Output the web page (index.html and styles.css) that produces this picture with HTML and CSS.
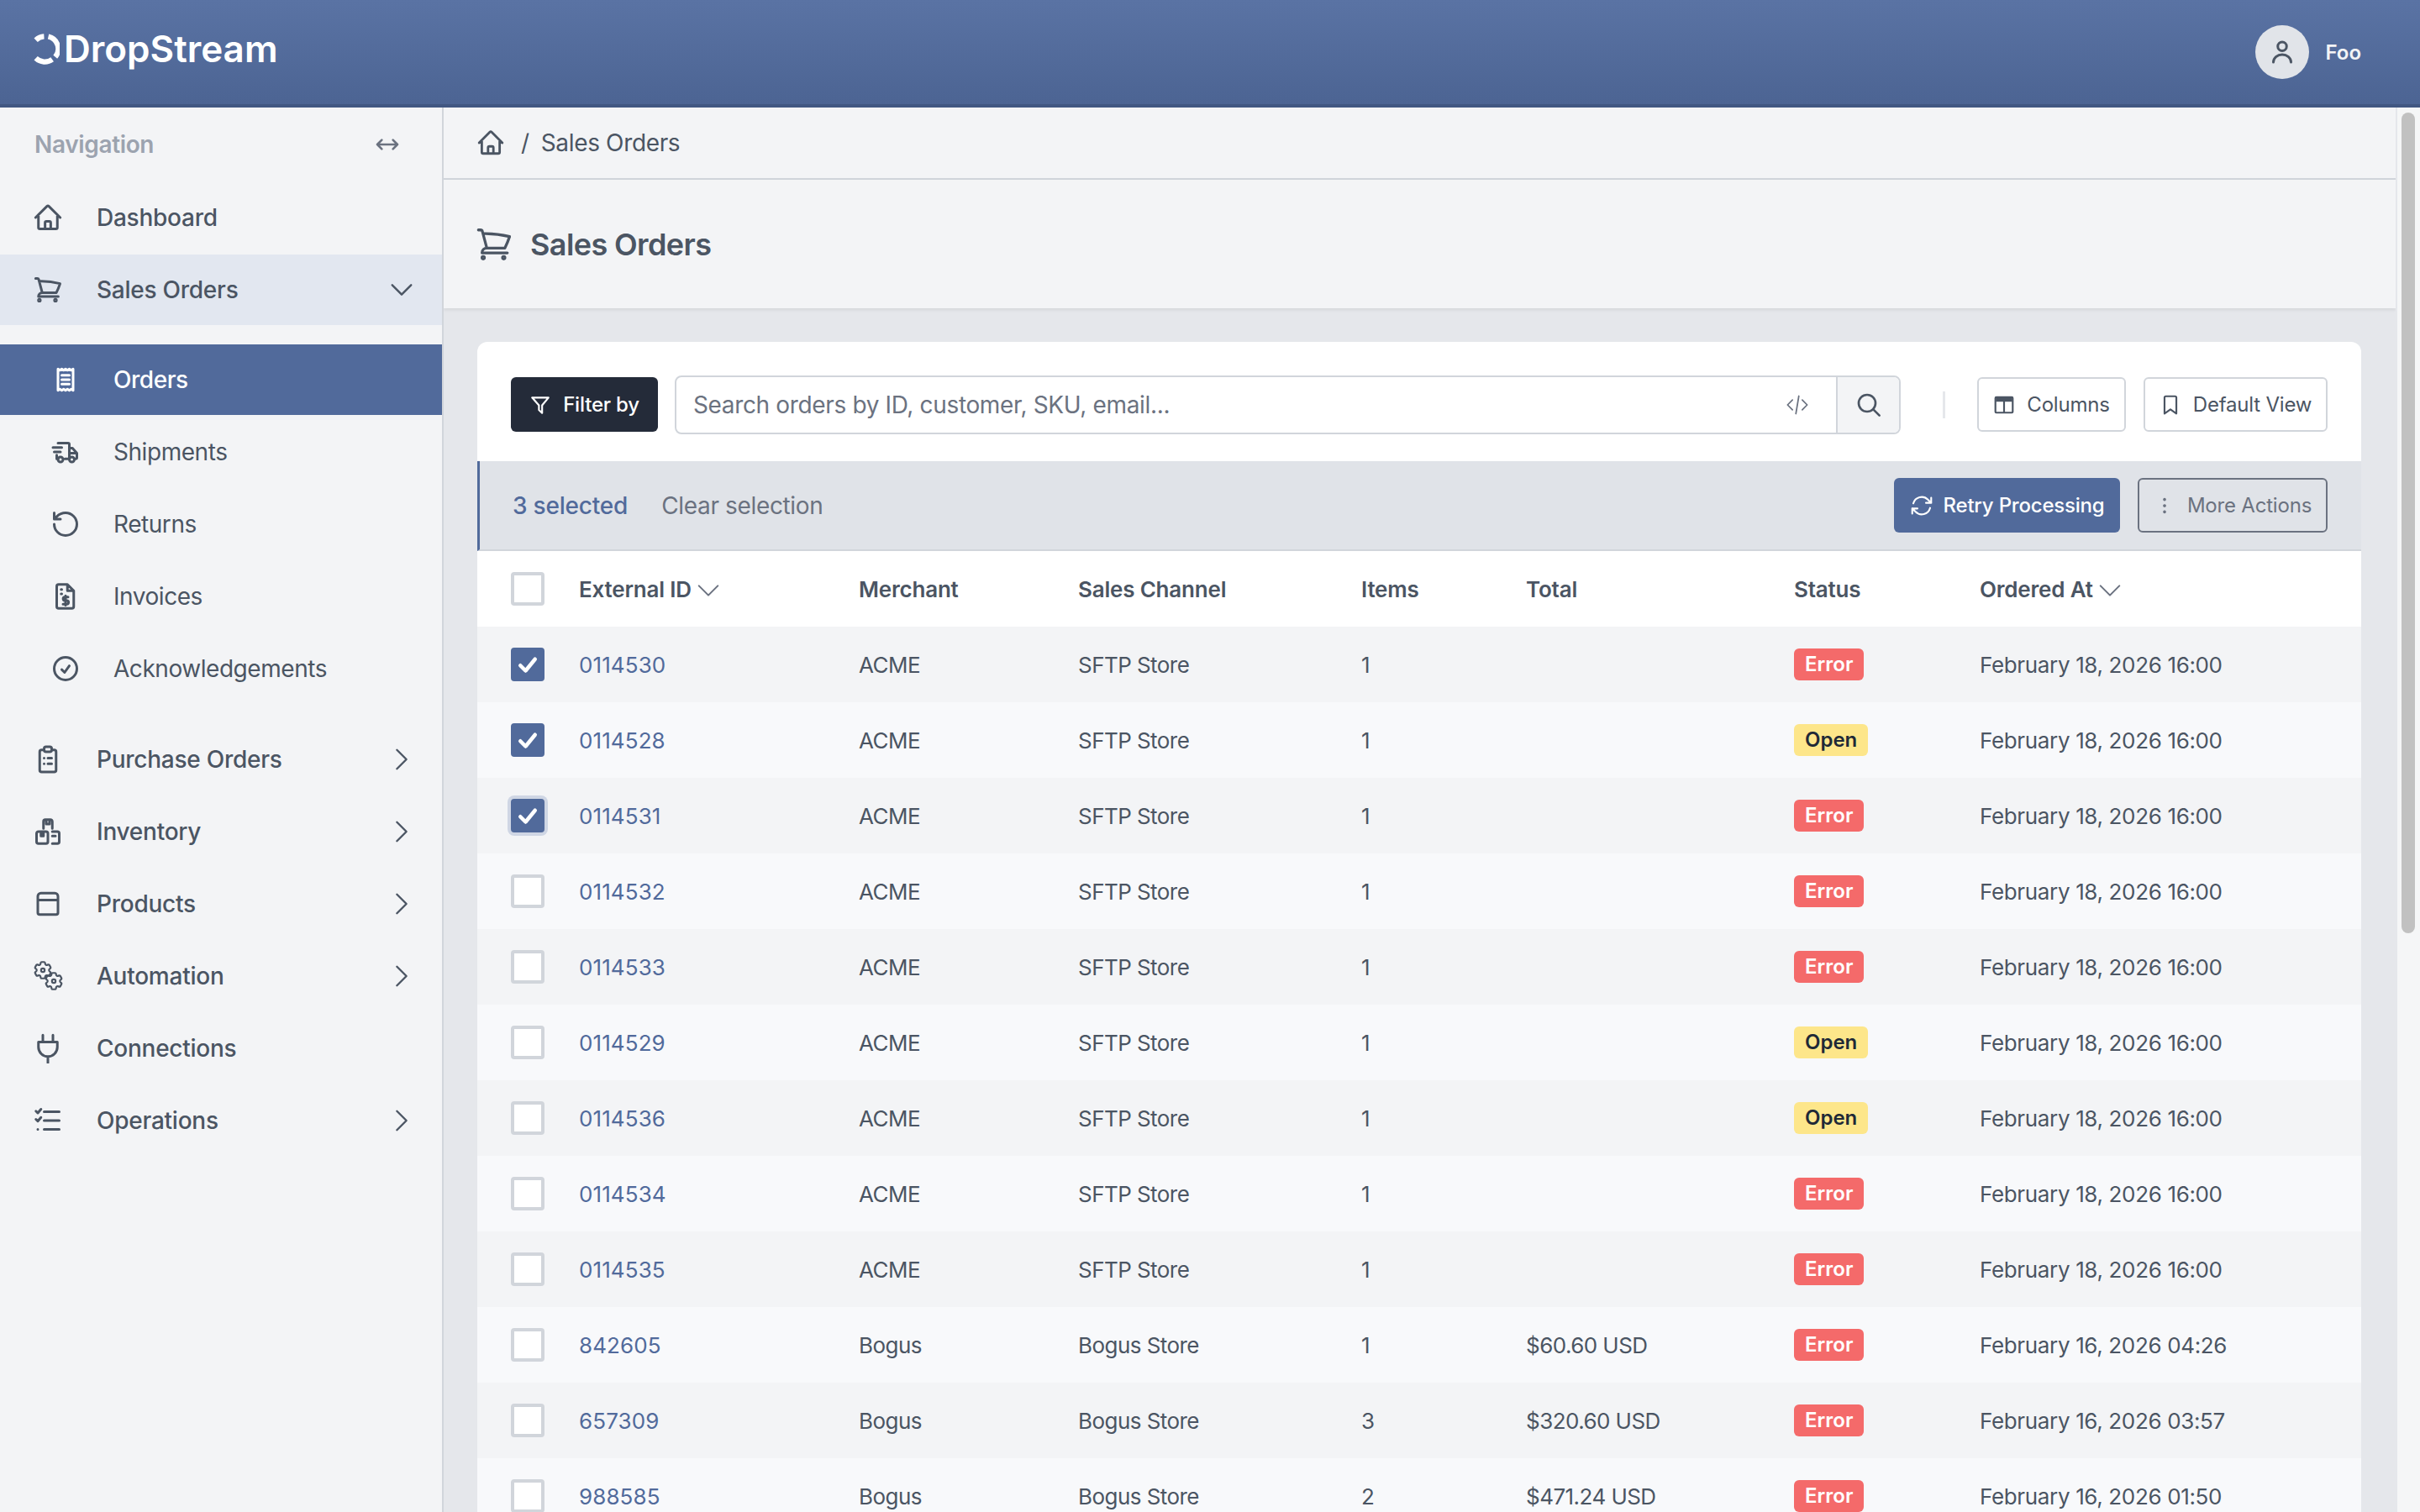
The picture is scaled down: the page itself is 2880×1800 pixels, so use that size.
FILE: index.html
```html
<!DOCTYPE html>
<html lang="en">
<head>
    <meta charset="UTF-8">
    <title>Sales Orders</title>
    <link rel="stylesheet" href="styles.css">
</head>
<body>
    <!-- icon sprite -->
    <svg class="sprite" xmlns="http://www.w3.org/2000/svg">
        <symbol id="i-home" viewBox="0 0 24 24"><path d="m2.25 12 8.954-8.955c.44-.439 1.152-.439 1.591 0L21.75 12M4.5 9.75v10.125c0 .621.504 1.125 1.125 1.125H9.75v-4.875c0-.621.504-1.125 1.125-1.125h2.25c.621 0 1.125.504 1.125 1.125V21h4.125c.621 0 1.125-.504 1.125-1.125V9.75M8.25 21h8.25"/></symbol>
        <symbol id="i-cart" viewBox="0 0 24 24"><path d="M2.25 3h1.386c.51 0 .955.343 1.087.835l.383 1.437M7.5 14.25a3 3 0 0 0-3 3h15.75m-12.75-3h11.218c1.121-2.3 2.1-4.684 2.924-7.138a60.114 60.114 0 0 0-16.536-1.84M7.5 14.25 5.106 5.272M6 20.25a.75.75 0 1 1-1.5 0 .75.75 0 0 1 1.5 0Zm12.75 0a.75.75 0 1 1-1.5 0 .75.75 0 0 1 1.5 0Z"/></symbol>
        <symbol id="i-down" viewBox="0 0 24 24"><path d="m19.5 8.25-7.5 7.5-7.5-7.5"/></symbol>
        <symbol id="i-right" viewBox="0 0 24 24"><path d="m8.25 4.5 7.5 7.5-7.5 7.5"/></symbol>
        <symbol id="i-expand" viewBox="0 0 24 24"><path d="M3 12h18M7 8l-4 4 4 4M17 8l4 4-4 4"/></symbol>
        <symbol id="i-receipt" viewBox="0 0 24 24"><path d="M6 3.5l1.5 1 1.5-1 1.5 1 1.500-1 1.500 1 1.500-1 1.500 1 1.500-1v17l-1.500-1-1.500 1-1.500-1-1.500 1-1.500-1-1.500 1-1.500-1-1.500 1zM9 8.500h6M9 12h6M9 15.500h6"/></symbol>
        <symbol id="i-truck" viewBox="0 0 24 24"><path d="M6 5h8a1 1 0 0 1 1 1v11.500h-3.500M15 9h2.500l3.500 4v3.500a1 1 0 0 1-1 1h-.5M15 13h6M6 17.500H5v-3M2 8.500h7M3 12h5"/><circle cx="8" cy="18" r="2"/><circle cx="17" cy="18" r="2"/></symbol>
        <symbol id="i-return" viewBox="0 0 24 24"><path d="M3 12a9 9 0 1 0 9-9 9.750 9.750 0 0 0-6.740 2.740L3 8M3 3v5h5"/></symbol>
        <symbol id="i-invoice" viewBox="0 0 24 24"><path d="M6.500 2.500h7l5 5v12.500a1.500 1.500 0 0 1-1.500 1.500H6.500A1.500 1.500 0 0 1 5 20V4a1.500 1.500 0 0 1 1.500-1.500zM13.500 2.500v5h5M8.500 6.500h.5M8.500 10h.5M14 12.500h-2.500a1.300 1.300 0 0 0 0 2.800h1.500a1.300 1.300 0 0 1 0 2.800H10M12 11.500v7.500"/></symbol>
        <symbol id="i-check" viewBox="0 0 24 24"><path d="M9 12.750 11.250 15 15 9.750M21 12a9 9 0 1 1-18 0 9 9 0 0 1 18 0Z"/></symbol>
        <symbol id="i-clipboard" viewBox="0 0 24 24"><path d="M9 4.500H7A1.500 1.500 0 0 0 5.500 6v14.500A1.500 1.500 0 0 0 7 22h10a1.500 1.500 0 0 0 1.500-1.500V6A1.500 1.500 0 0 0 17 4.500h-2M9 3.500A1.500 1.500 0 0 1 10.500 2h3A1.500 1.500 0 0 1 15 3.500v1A1.500 1.500 0 0 1 13.500 6h-3A1.500 1.500 0 0 1 9 4.500zM12 11h3M12 15.500h3M9 11h.01M9 15.500h.01"/></symbol>
        <symbol id="i-boxes" viewBox="0 0 24 24"><path d="M8.500 9.500V4a1.500 1.500 0 0 1 1.500-1.500h4A1.500 1.500 0 0 1 15.500 4v5.500M10.700 2.500v3.500h2.600V2.500M4.500 12h6A1.500 1.500 0 0 1 12 13.500V20a1.500 1.500 0 0 1-1.500 1.500h-6A1.500 1.500 0 0 1 3 20v-6.500A1.500 1.500 0 0 1 4.500 12zM6.500 12v3.500h2V12M15.500 12h4a1.500 1.500 0 0 1 1.500 1.500V20a1.500 1.500 0 0 1-1.500 1.500H15.500M15.500 15.500H18"/></symbol>
        <symbol id="i-box" viewBox="0 0 24 24"><path d="M6.500 3.500h11A2.500 2.500 0 0 1 20 6v13a1.500 1.500 0 0 1-1.500 1.500h-13A1.500 1.500 0 0 1 4 19V6a2.500 2.500 0 0 1 2.500-2.500zM4 9h16"/></symbol>
        <symbol id="i-cog" viewBox="0 0 24 24"><path d="M9.594 3.940c.090-.542.560-.940 1.110-.940h2.593c.550 0 1.020.398 1.110.940l.213 1.281c.063.374.313.686.645.870.074.040.147.083.220.127.325.196.720.257 1.075.124l1.217-.456a1.125 1.125 0 0 1 1.370.490l1.296 2.247a1.125 1.125 0 0 1-.260 1.431l-1.003.827c-.293.241-.438.613-.430.992a7.723 7.723 0 0 1 0 .255c-.008.378.137.750.430.991l1.004.827c.424.350.534.955.260 1.430l-1.298 2.247a1.125 1.125 0 0 1-1.369.491l-1.217-.456c-.355-.133-.750-.072-1.076.124a6.470 6.470 0 0 1-.220.128c-.331.183-.581.495-.644.869l-.213 1.281c-.090.543-.560.940-1.110.940h-2.594c-.550 0-1.019-.398-1.110-.940l-.213-1.281c-.062-.374-.312-.686-.644-.870a6.520 6.520 0 0 1-.220-.127c-.325-.196-.720-.257-1.076-.124l-1.217.456a1.125 1.125 0 0 1-1.369-.490l-1.297-2.247a1.125 1.125 0 0 1 .260-1.431l1.004-.827c.292-.240.437-.613.430-.991a6.932 6.932 0 0 1 0-.255c.007-.380-.138-.751-.430-.992l-1.004-.827a1.125 1.125 0 0 1-.260-1.430l1.297-2.247a1.125 1.125 0 0 1 1.370-.491l1.216.456c.356.133.751.072 1.076-.124.072-.044.146-.086.220-.128.332-.183.582-.495.644-.869l.214-1.280ZM14 12a2 2 0 1 1-4 0 2 2 0 0 1 4 0Z"/></symbol>
        <symbol id="i-plug" viewBox="0 0 24 24"><path d="M8 1.500V7M16 1.500V7M4.500 7h15v4a7.500 7.500 0 0 1-15 0zM12 18.500v5"/></symbol>
        <symbol id="i-list" viewBox="0 0 24 24"><path d="M9 5h12M9 12h12M9 19h12M2.500 4.500 4 6l2.500-3M2.500 11 4 12.500l2.500-3M4 19h.01"/></symbol>
        <symbol id="i-user" viewBox="0 0 24 24"><circle cx="12" cy="7.500" r="3.500"/><path d="M5 20a7 6 0 0 1 14 0"/></symbol>
        <symbol id="i-filter" viewBox="0 0 24 24"><path d="M3 4h18l-7 8.500V21l-3.500-3.500v-5z"/></symbol>
        <symbol id="i-code" viewBox="0 0 24 24"><path d="M7 7l-5 5 5 5M17 7l5 5-5 5M13.500 3l-3 18"/></symbol>
        <symbol id="i-search" viewBox="0 0 24 24"><circle cx="10.500" cy="10.500" r="7.500"/><path d="M16 16l5.500 5.500"/></symbol>
        <symbol id="i-columns" viewBox="0 0 24 24"><path d="M3.500 3.500h17a1 1 0 0 1 1 1v15a1 1 0 0 1-1 1h-17a1 1 0 0 1-1-1v-15a1 1 0 0 1 1-1zM12 8v12.500"/><path class="solid" d="M3 3.500h18v5H3z"/></symbol>
        <symbol id="i-bookmark" viewBox="0 0 24 24"><path d="M7 2.500h10a1.500 1.500 0 0 1 1.500 1.500v17.500L12 17l-6.500 4.500V4A1.500 1.500 0 0 1 7 2.500z"/></symbol>
        <symbol id="i-retry" viewBox="0 0 24 24"><path d="M16.023 9.348h4.992v-.001M2.985 19.644v-4.992m0 0h4.992m-4.993 0 3.181 3.183a8.250 8.250 0 0 0 13.803-3.700M4.031 9.865a8.250 8.250 0 0 1 13.803-3.700l3.181 3.182m0-4.991v4.990"/></symbol>
        <symbol id="i-dots" viewBox="0 0 24 24"><path class="solid" d="M12 3.500a1.700 1.700 0 1 0 .01 0zM12 10.300a1.700 1.700 0 1 0 .01 0zM12 17.100a1.700 1.700 0 1 0 .01 0z"/></symbol>
        <symbol id="i-tick" viewBox="0 0 24 24"><path d="M5 13l5 5 9-11"/></symbol>
    </svg>

    <header class="topbar">
        <div class="logo">
            <svg class="logo-mark" viewBox="0 0 30 36">
                <path d="M2.500 7.500A15 15 0 0 1 12 3.300"/>
                <path d="M17 3.500A14.500 14.500 0 0 1 25 27"/>
                <path d="M21.500 30A15 15 0 0 1 2.500 28.500"/>
            </svg>
            <span class="logo-text">DropStream</span>
        </div>
        <div class="account">
            <span class="avatar"><svg class="ico"><use href="#i-user"/></svg></span>
            <span class="account-name">Foo</span>
        </div>
    </header>

    <div class="layout">
        <nav class="sidebar">
            <div class="nav-head">
                <span>Navigation</span>
                <svg class="ico ico-expand"><use href="#i-expand"/></svg>
            </div>
            <div class="nav-list">
                <a class="nav-item" href="#"><svg class="ico"><use href="#i-home"/></svg><span>Dashboard</span></a>
                <a class="nav-item open" href="#"><svg class="ico"><use href="#i-cart"/></svg><span>Sales Orders</span><svg class="ico chev"><use href="#i-down"/></svg></a>
                <div class="nav-list subnav">
                    <a class="nav-item active" href="#"><svg class="ico"><use href="#i-receipt"/></svg><span>Orders</span></a>
                    <a class="nav-item" href="#"><svg class="ico"><use href="#i-truck"/></svg><span>Shipments</span></a>
                    <a class="nav-item" href="#"><svg class="ico"><use href="#i-return"/></svg><span>Returns</span></a>
                    <a class="nav-item" href="#"><svg class="ico"><use href="#i-invoice"/></svg><span>Invoices</span></a>
                    <a class="nav-item" href="#"><svg class="ico"><use href="#i-check"/></svg><span>Acknowledgements</span></a>
                </div>
                <a class="nav-item" href="#"><svg class="ico"><use href="#i-clipboard"/></svg><span>Purchase Orders</span><svg class="ico chev"><use href="#i-right"/></svg></a>
                <a class="nav-item" href="#"><svg class="ico"><use href="#i-boxes"/></svg><span>Inventory</span><svg class="ico chev"><use href="#i-right"/></svg></a>
                <a class="nav-item" href="#"><svg class="ico"><use href="#i-box"/></svg><span>Products</span><svg class="ico chev"><use href="#i-right"/></svg></a>
                <a class="nav-item" href="#"><span class="cogs"><svg class="ico cog-a"><use href="#i-cog"/></svg><svg class="ico cog-b"><use href="#i-cog"/></svg></span><span>Automation</span><svg class="ico chev"><use href="#i-right"/></svg></a>
                <a class="nav-item" href="#"><svg class="ico"><use href="#i-plug"/></svg><span>Connections</span></a>
                <a class="nav-item" href="#"><svg class="ico"><use href="#i-list"/></svg><span>Operations</span><svg class="ico chev"><use href="#i-right"/></svg></a>
            </div>
        </nav>

        <main class="content">
            <div class="breadcrumb">
                <svg class="ico"><use href="#i-home"/></svg>
                <span class="crumb-sep">/</span>
                <span>Sales Orders</span>
            </div>
            <div class="page-title">
                <svg class="ico"><use href="#i-cart"/></svg>
                <h1>Sales Orders</h1>
            </div>

            <section class="card">
                <div class="toolbar">
                    <button class="btn btn-dark"><svg class="ico"><use href="#i-filter"/></svg>Filter by</button>
                    <div class="search">
                        <span class="search-text">Search orders by ID, customer, SKU, email...</span>
                        <svg class="ico ico-code"><use href="#i-code"/></svg>
                        <span class="search-btn"><svg class="ico"><use href="#i-search"/></svg></span>
                    </div>
                    <span class="toolbar-sep"></span>
                    <button class="btn btn-line btn-columns"><svg class="ico"><use href="#i-columns"/></svg>Columns</button>
                    <button class="btn btn-line btn-view"><svg class="ico"><use href="#i-bookmark"/></svg>Default View</button>
                </div>

                <div class="selection">
                    <span class="sel-count">3 selected</span>
                    <span class="sel-clear">Clear selection</span>
                    <button class="btn btn-primary"><svg class="ico"><use href="#i-retry"/></svg>Retry Processing</button>
                    <button class="btn btn-muted"><svg class="ico"><use href="#i-dots"/></svg>More Actions</button>
                </div>

                <table class="orders">
                    <colgroup>
                        <col class="c-check"><col class="c-id"><col class="c-merchant"><col class="c-channel">
                        <col class="c-items"><col class="c-total"><col class="c-status"><col>
                    </colgroup>
                    <thead>
                        <tr>
                            <th><span class="box"></span></th>
                            <th>External ID <svg class="ico sort"><use href="#i-down"/></svg></th>
                            <th>Merchant</th>
                            <th>Sales Channel</th>
                            <th>Items</th>
                            <th>Total</th>
                            <th>Status</th>
                            <th>Ordered At <svg class="ico sort"><use href="#i-down"/></svg></th>
                        </tr>
                    </thead>
                    <tbody>
                        <tr><td><span class="box on"><svg class="ico"><use href="#i-tick"/></svg></span></td><td><a href="#">0114530</a></td><td>ACME</td><td>SFTP Store</td><td>1</td><td></td><td><span class="badge error">Error</span></td><td>February 18, 2026 16:00</td></tr>
                        <tr><td><span class="box on"><svg class="ico"><use href="#i-tick"/></svg></span></td><td><a href="#">0114528</a></td><td>ACME</td><td>SFTP Store</td><td>1</td><td></td><td><span class="badge open">Open</span></td><td>February 18, 2026 16:00</td></tr>
                        <tr><td><span class="box on focus"><svg class="ico"><use href="#i-tick"/></svg></span></td><td><a href="#">0114531</a></td><td>ACME</td><td>SFTP Store</td><td>1</td><td></td><td><span class="badge error">Error</span></td><td>February 18, 2026 16:00</td></tr>
                        <tr><td><span class="box"></span></td><td><a href="#">0114532</a></td><td>ACME</td><td>SFTP Store</td><td>1</td><td></td><td><span class="badge error">Error</span></td><td>February 18, 2026 16:00</td></tr>
                        <tr><td><span class="box"></span></td><td><a href="#">0114533</a></td><td>ACME</td><td>SFTP Store</td><td>1</td><td></td><td><span class="badge error">Error</span></td><td>February 18, 2026 16:00</td></tr>
                        <tr><td><span class="box"></span></td><td><a href="#">0114529</a></td><td>ACME</td><td>SFTP Store</td><td>1</td><td></td><td><span class="badge open">Open</span></td><td>February 18, 2026 16:00</td></tr>
                        <tr><td><span class="box"></span></td><td><a href="#">0114536</a></td><td>ACME</td><td>SFTP Store</td><td>1</td><td></td><td><span class="badge open">Open</span></td><td>February 18, 2026 16:00</td></tr>
                        <tr><td><span class="box"></span></td><td><a href="#">0114534</a></td><td>ACME</td><td>SFTP Store</td><td>1</td><td></td><td><span class="badge error">Error</span></td><td>February 18, 2026 16:00</td></tr>
                        <tr><td><span class="box"></span></td><td><a href="#">0114535</a></td><td>ACME</td><td>SFTP Store</td><td>1</td><td></td><td><span class="badge error">Error</span></td><td>February 18, 2026 16:00</td></tr>
                        <tr><td><span class="box"></span></td><td><a href="#">842605</a></td><td>Bogus</td><td>Bogus Store</td><td>1</td><td>$60.60 USD</td><td><span class="badge error">Error</span></td><td>February 16, 2026 04:26</td></tr>
                        <tr><td><span class="box"></span></td><td><a href="#">657309</a></td><td>Bogus</td><td>Bogus Store</td><td>3</td><td>$320.60 USD</td><td><span class="badge error">Error</span></td><td>February 16, 2026 03:57</td></tr>
                        <tr><td><span class="box"></span></td><td><a href="#">988585</a></td><td>Bogus</td><td>Bogus Store</td><td>2</td><td>$471.24 USD</td><td><span class="badge error">Error</span></td><td>February 16, 2026 01:50</td></tr>
                    </tbody>
                </table>
            </section>
        </main>

        <div class="scrollbar"><span class="scroll-thumb"></span></div>
    </div>
</body>
</html>
```

FILE: styles.css
```css
* {
    margin: 0;
    padding: 0;
    box-sizing: border-box;
}
html, body {
    height: 100%;
    overflow: hidden;
}
body {
    display: flex;
    flex-direction: column;
    font-family: "Inter", "Liberation Sans", sans-serif;
    font-size: 28px;
    letter-spacing: -0.35px;
    color: #4b5563;
    background: #e5e7eb;
}
a {
    text-decoration: none;
    color: inherit;
}
button {
    font-family: inherit;
    letter-spacing: inherit;
    cursor: pointer;
}
.sprite {
    display: none;
}
.ico {
    flex: none;
    width: 36px;
    height: 36px;
    fill: none;
    stroke: currentColor;
    stroke-width: 2;
    stroke-linecap: round;
    stroke-linejoin: round;
}
.solid {
    fill: currentColor;
    stroke: none;
}

/* top bar */
.topbar {
    flex: none;
    height: 128px;
    display: flex;
    align-items: center;
    justify-content: space-between;
    padding: 0 70px 0 40px;
    background: linear-gradient(#5a73a4, #4c6493);
    border-bottom: 4px solid #415782;
    color: #fff;
}
.logo {
    display: flex;
    align-items: center;
    gap: 5px;
    margin-bottom: 8px;
}
.logo-mark {
    width: 31px;
    height: 37px;
    fill: none;
    stroke: #fff;
    stroke-width: 6;
}
.logo-text {
    font-size: 44px;
    font-weight: 600;
    letter-spacing: 0;
}
.account {
    display: flex;
    align-items: center;
    gap: 19px;
}
.avatar {
    width: 64px;
    height: 64px;
    margin-left: -1px;
    border-radius: 50%;
    background: #e1e4e9;
    color: #4b5563;
    display: flex;
    align-items: center;
    justify-content: center;
}
.account-name {
    font-size: 24px;
    font-weight: 600;
    letter-spacing: 0;
    color: #f3f4f6;
}

/* page frame */
.layout {
    flex: 1;
    min-height: 0;
    display: flex;
}
.sidebar {
    flex: none;
    width: 528px;
    background: #f3f4f6;
    border-right: 2px solid #d1d5db;
}
.nav-head {
    height: 89px;
    display: flex;
    align-items: center;
    justify-content: space-between;
    padding: 0 49px 2px 41px;
    font-weight: 600;
    color: #9ca3af;
}
.ico-expand {
    width: 32px;
    height: 32px;
    color: #6b7280;
}
.nav-list {
    display: flex;
    flex-direction: column;
    gap: 2px;
}
.nav-item {
    height: 84px;
    display: flex;
    align-items: center;
    gap: 40px;
    padding: 0 30px 0 39px;
    font-weight: 500;
    letter-spacing: -0.25px;
}
.nav-item.open {
    background: #e2e7f0;
}
.subnav {
    margin: 21px 0 22px;
}
.subnav .nav-item {
    gap: 39px;
    padding-left: 60px;
    font-weight: 400;
    letter-spacing: -0.45px;
}
.subnav .nav-item.active {
    background: #516a9b;
    color: #fff;
    font-weight: 500;
}
.chev {
    margin-left: auto;
    stroke-width: 1.6;
}
.cogs {
    flex: none;
    position: relative;
    width: 36px;
    height: 36px;
}
.cogs .ico {
    position: absolute;
    width: 26px;
    height: 26px;
}
.cog-a {
    left: -1px;
    top: -2px;
}
.cog-b {
    right: -2px;
    bottom: -1px;
}

/* main column */
.content {
    flex: 1;
    min-width: 0;
    overflow: hidden;
}
.breadcrumb {
    height: 86px;
    display: flex;
    align-items: center;
    padding-left: 39px;
    background: #f3f4f6;
    border-bottom: 2px solid #d1d5db;
}
.breadcrumb .ico {
    width: 34px;
    height: 34px;
}
.crumb-sep {
    margin: 0 14px 0 19px;
}
.page-title {
    height: 153px;
    display: flex;
    align-items: center;
    gap: 20px;
    padding-left: 37px;
    background: #f3f4f6;
    box-shadow: 0 2px 4px rgba(0, 0, 0, 0.08);
}
.page-title .ico {
    width: 46px;
    height: 46px;
    stroke-width: 1.7;
}
.page-title h1 {
    font-size: 36px;
    font-weight: 600;
    letter-spacing: -0.6px;
}
.card {
    margin: 40px 41px 0 40px;
    background: #fff;
    border-radius: 12px 12px 0 0;
}

/* buttons */
.btn {
    flex: none;
    height: 65px;
    display: inline-flex;
    align-items: center;
    justify-content: center;
    gap: 14px;
    font-size: 24px;
    font-weight: 500;
    letter-spacing: -0.2px;
    white-space: nowrap;
    border-radius: 6px;
    border: 2px solid transparent;
    background: none;
}
.btn .ico {
    width: 26px;
    height: 26px;
}
.btn-dark {
    width: 175px;
    background: #242b39;
    color: #fff;
}
.btn-line {
    border-color: #d1d5db;
    color: #4b5563;
    font-weight: 400;
}
.btn-columns {
    width: 177px;
}
.btn-view {
    width: 219px;
    margin-left: 21px;
}
.btn-primary {
    width: 269px;
    gap: 10px;
    background: #516a9b;
    color: #fff;
}
.btn-primary .ico {
    width: 30px;
    height: 30px;
    stroke-width: 1.7;
}
.btn-muted {
    width: 226px;
    margin-left: 21px;
    border-color: #6b7280;
    color: #6b7280;
    font-weight: 400;
}

/* toolbar */
.toolbar {
    height: 142px;
    display: flex;
    align-items: center;
    padding: 7px 40px 0;
}
.search {
    flex: none;
    width: 1459px;
    height: 70px;
    margin-left: 20px;
    display: flex;
    align-items: center;
    border: 2px solid #d1d5db;
    border-radius: 8px;
    overflow: hidden;
}
.search-text {
    flex: 1;
    padding-left: 20px;
    color: #6b7280;
}
.ico-code {
    width: 28px;
    height: 28px;
    margin-right: 32px;
    stroke-width: 1.5;
    color: #6b7280;
}
.search-btn {
    width: 75px;
    height: 100%;
    display: flex;
    align-items: center;
    justify-content: center;
    background: #f3f4f6;
    border-left: 2px solid #d1d5db;
}
.search-btn .ico {
    width: 32px;
    height: 32px;
}
.toolbar-sep {
    flex: none;
    width: 3px;
    height: 32px;
    margin: 0 38px 0 50px;
    background: #e5e7eb;
}

/* selection bar */
.selection {
    height: 107px;
    display: flex;
    align-items: center;
    padding: 0 40px 0 39px;
    background: #e0e3e8;
    border-left: 3px solid #516a9b;
    border-bottom: 2px solid #d1d5db;
}
.sel-count {
    font-weight: 500;
    letter-spacing: -0.2px;
    color: #516a9b;
}
.sel-clear {
    margin-left: 40px;
    margin-right: auto;
    color: #6b7280;
}

/* table */
.orders {
    width: 100%;
    table-layout: fixed;
    border-collapse: collapse;
    font-size: 26px;
}
.c-check { width: 121px; }
.c-id { width: 333px; }
.c-merchant { width: 261px; }
.c-channel { width: 337px; }
.c-items { width: 196px; }
.c-total { width: 319px; }
.c-status { width: 221px; }
.orders th,
.orders td {
    height: 90px;
    text-align: left;
    vertical-align: middle;
    white-space: nowrap;
}
.orders th {
    font-weight: 600;
    letter-spacing: -0.2px;
}
.orders th:first-child,
.orders td:first-child {
    padding-left: 40px;
}
.orders tbody tr:nth-child(odd) {
    background: #f3f4f6;
}
.orders tbody tr:nth-child(even) {
    background: #f8f9fb;
}
.orders td:nth-child(3),
.orders td:nth-child(4),
.orders td:nth-child(6) {
    letter-spacing: -0.55px;
}
.orders td a {
    color: #516a9b;
    letter-spacing: 0.1px;
}
.sort {
    margin: -6px 0 -6px -4px;
    vertical-align: middle;
    stroke-width: 1.4;
    color: #6b7280;
}
.box {
    display: flex;
    align-items: center;
    justify-content: center;
    width: 40px;
    height: 40px;
    border: 4px solid #d1d5db;
    border-radius: 4px;
    background: #fff;
}
.box.on {
    border-color: #516a9b;
    background: #516a9b;
    color: #fff;
}
.box.on .ico {
    width: 30px;
    height: 30px;
    stroke-width: 3.6;
}
.box.focus {
    box-shadow: 0 0 0 4px #cfd6e4;
}
.badge {
    display: inline-block;
    height: 38px;
    line-height: 38px;
    padding: 0 13px;
    border-radius: 6px;
    font-size: 24px;
    font-weight: 600;
    letter-spacing: 0;
}
.badge.error {
    background: #f46a6a;
    color: #fff;
}
.badge.open {
    background: #fde68a;
    color: #1f2937;
}

/* scrollbar */
.scrollbar {
    flex: none;
    width: 29px;
    padding: 6px 6px 0 5px;
    background: #f5f6f7;
    border-left: 2px solid #e5e7eb;
}
.scroll-thumb {
    display: block;
    height: 977px;
    border-radius: 8px;
    background: #c1c1c1;
}
```
